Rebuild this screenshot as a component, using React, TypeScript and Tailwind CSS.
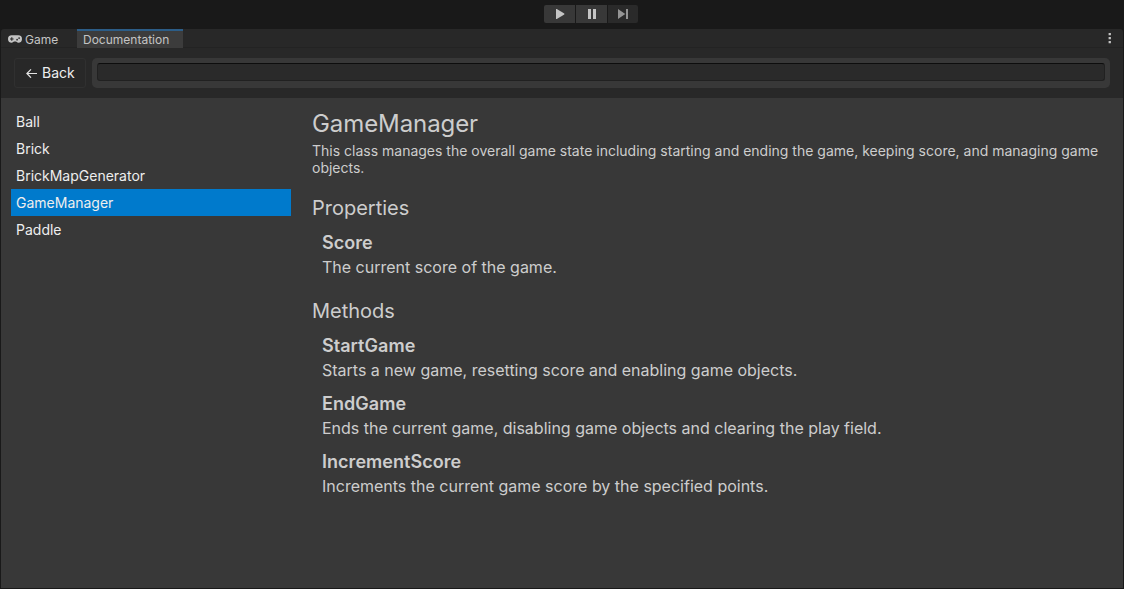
import React from "react";

const classes = ["Ball", "Brick", "BrickMapGenerator", "GameManager", "Paddle"];

type Member = { name: string; text: string };

const properties: Member[] = [{ name: "Score", text: "The current score of the game." }];

const methods: Member[] = [
  { name: "StartGame", text: "Starts a new game, resetting score and enabling game objects." },
  { name: "EndGame", text: "Ends the current game, disabling game objects and clearing the play field." },
  { name: "IncrementScore", text: "Increments the current game score by the specified points." },
];

function PlayControls() {
  return (
    <div className="flex h-[29px] shrink-0 items-start gap-px pl-[544px] pt-[5px]">
      <button className="flex h-[18px] w-[31px] items-center justify-center rounded-l-xs bg-[#383838]">
        <svg width="9" height="10" viewBox="0 0 9 10" className="ml-px"><path d="M0 0H0.8L8.3 4.6V5.4L0.8 10H0Z" fill="#c4c4c4" /></svg>
      </button>
      <button className="flex h-[18px] w-[31px] items-center justify-center bg-[#383838]">
        <svg width="8" height="10" viewBox="0 0 8 10"><path d="M0 0H3V10H0ZM5 0H8V10H5Z" fill="#c4c4c4" /></svg>
      </button>
      <button className="flex h-[18px] w-[30px] items-center justify-center rounded-r-xs bg-[#2a2a2a]">
        <svg width="10" height="10" viewBox="0 0 10 10"><path d="M0 0L7.3 5L0 10ZM8 0H10V10H8Z" fill="#949494" /></svg>
      </button>
    </div>
  );
}

function TabBar() {
  return (
    <div className="flex h-[19px] shrink-0 border-b border-[#232323] text-[12px] leading-[20px] text-[#c4c4c4]">
      <div className="flex w-[76px] shrink-0 items-center pl-[7px]">
        <svg width="14" height="8" viewBox="0 0 14 8" className="mr-[3px] mt-[2px] shrink-0">
          <path d="M3.7 0.3H10.3A3.7 3.7 0 0 1 10.3 7.7C9 7.7 8.7 6.5 7.8 6.5H6.2C5.3 6.5 5 7.7 3.7 7.7A3.7 3.7 0 0 1 3.7 0.3Z" fill="#c4c4c4" />
          <path d="M2 4H5.6M3.8 2.2V5.8" stroke="#282828" strokeWidth="1.1" />
          <circle cx="9.1" cy="4.7" r="0.85" fill="#282828" />
          <circle cx="11.1" cy="3.1" r="0.85" fill="#282828" />
        </svg>
        <span className="mt-[4px]">Game</span>
      </div>
      <div className="h-[19px] w-[106px] shrink-0 border-t-2 border-[#2c5d87] bg-[#3c3c3c] pl-[6px] leading-[18px]">
        Documentation
      </div>
      <div className="flex flex-1 justify-end pr-[12px] pt-[4px]">
        <svg width="3" height="11" viewBox="0 0 3 11"><path d="M0.6 0H2.9V2.2H0.6ZM0.6 4H2.9V6.2H0.6ZM0.6 8H2.9V10.2H0.6Z" fill="#c4c4c4" /></svg>
      </div>
    </div>
  );
}

function Toolbar() {
  return (
    <div className="flex h-[50px] shrink-0 gap-[6px] pl-[13px] pr-[13px] pt-[10px]">
      <button className="flex h-[30px] w-[72px] shrink-0 items-center rounded-[3px] border border-[#303030] pl-[11px] text-[14px] text-[#eeeeee]">
        <svg width="11" height="10" viewBox="0 0 11 10" className="mr-[5px]" fill="none" stroke="#e4e4e4" strokeWidth="1.2">
          <path d="M11 5.5H1M5 1.3L0.9 5.5L5 9.7" />
        </svg>
        <span className="-mt-px">Back</span>
      </button>
      <div className="h-[30px] flex-1 rounded-[5px] bg-[#383838] p-[5px]">
        <div className="h-[18px] rounded-[3px] border border-[#212121] border-t-[#0d0d0d] bg-[#2a2a2a]" />
      </div>
    </div>
  );
}

function Members({ items }: { items: Member[] }) {
  return (
    <div className="flex flex-col pl-[10px]">
      {items.map((m) => (
        <div key={m.name} className="h-[58px]">
          <h3 className="h-[25px] whitespace-nowrap text-[18px] font-semibold leading-[25px] tracking-[0.04px]">{m.name}</h3>
          <p className="h-[25px] whitespace-nowrap text-[16px] leading-[25px]">{m.text}</p>
        </div>
      ))}
    </div>
  );
}

export default function App() {
  return (
    <div className="flex h-[589px] w-[1124px] flex-col overflow-hidden bg-[#191919] font-['Inter','Liberation_Sans',sans-serif]">
      <PlayControls />
      <div className="mx-px mb-px flex min-h-0 flex-1 flex-col overflow-hidden rounded-t-[3px] bg-[#282828]">
        <TabBar />
        <Toolbar />
        <div className="flex min-h-0 flex-1 bg-[#383838]">
          <ul className="w-[300px] shrink-0 px-[10px] pt-[10px] text-[14px] leading-[27px] text-[#eeeeee]">
            {classes.map((c) => (
              <li key={c} className={c === "GameManager" ? "h-[27px] bg-[#007acc] pl-[5px]" : "h-[27px] pl-[5px]"}>
                {c}
              </li>
            ))}
          </ul>
          <main className="flex-1 pl-[11px] pt-[10px] text-[#cdcdcd]">
            <h1 className="h-[34px] whitespace-nowrap text-[24px] leading-[31px] tracking-[-0.08px]">GameManager</h1>
            <p className="h-[34px] whitespace-nowrap text-[14px] leading-[17px]">
              This class manages the overall game state including starting and ending the game, keeping score, and managing game
              <br />
              objects.
            </p>
            <h2 className="mt-[17px] h-[37px] text-[20px] leading-[31px]">Properties</h2>
            <Members items={properties} />
            <h2 className="mt-[8px] h-[37px] text-[20px] leading-[31px]">Methods</h2>
            <Members items={methods} />
          </main>
        </div>
      </div>
    </div>
  );
}
